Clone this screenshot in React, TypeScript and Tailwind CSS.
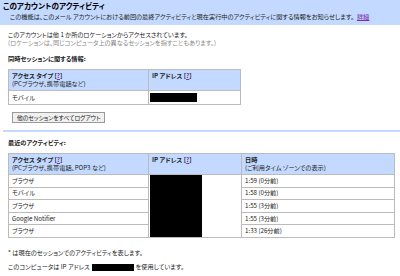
const rows = [
  { type: "ブラウザ", time: "1:59 (0分前)" },
  { type: "モバイル", time: "1:58 (0分前)" },
  { type: "ブラウザ", time: "1:55 (3分前)" },
  { type: "Google Notifier", time: "1:55 (3分前)" },
  { type: "ブラウザ", time: "1:33 (26分前)" },
];

function Help() {
  return (
    <>
      [<a className="text-[#7a2fb0] underline">?</a>]
    </>
  );
}

export default function App() {
  return (
    <div className="w-[400px] h-[276px] overflow-hidden bg-white text-[6.2px] leading-[8px] text-[#222] font-['Noto_Sans_CJK_JP','Noto_Sans',sans-serif] [font-feature-settings:'palt']">
      <div className="bg-[#c3d9ff] pl-[3px] pt-[1px] pb-[4px]">
        <h1 className="text-[7.6px] leading-[10px] font-bold text-black">このアカウントのアクティビティ</h1>
        <p className="pl-[7px] mt-[2px] whitespace-nowrap">
          この機能は、このメール アカウントにおける前回の最終アクティビティと現在実行中のアクティビティに関する情報をお知らせします。
          <a className="ml-[3px] text-[#7a2fb0] underline">詳細</a>
        </p>
      </div>

      <div className="px-[8px]">
        <p className="mt-[6px]">このアカウントは他 1 か所のロケーションからアクセスされています。</p>
        <p className="text-[#888]">(ロケーションは、同じコンピュータ上の異なるセッションを指すこともあります。)</p>
        <h2 className="mt-[8px] font-bold">同時セッションに関する情報:</h2>

        <table className="mt-[6px] w-[233px] border-collapse border border-[#bbb]">
          <tbody>
            <tr className="bg-[#c3d9ff] align-top">
              <td className="w-[140px] h-[21px] border border-[#bbb] px-[3px] pt-[2px]">
                <div className="font-bold">
                  アクセス タイプ <Help />
                </div>
                <div>(PCブラウザ、携帯電話など)</div>
              </td>
              <td className="border border-[#bbb] px-[3px] pt-[2px] font-bold">
                IP アドレス <Help />
              </td>
            </tr>
            <tr>
              <td className="h-[14px] border border-[#bbb] px-[3px]">モバイル</td>
              <td className="border border-[#bbb] px-[1px]">
                <div className="w-[47px] h-[9px] bg-black" />
              </td>
            </tr>
          </tbody>
        </table>

        <button className="mt-[7px] ml-[4px] h-[11px] px-[4px] border border-[#999] bg-[#f0f0f0] text-[5.8px] leading-[8px]">
          他のセッションをすべてログアウト
        </button>
      </div>

      <div className="mt-[7px] ml-[3px] h-[2px] bg-[#c3d9ff]" />

      <div className="px-[8px]">
        <h2 className="mt-[7px] font-bold">最近のアクティビティ:</h2>

        <table className="mt-[6px] w-[387px] border-collapse border border-[#bbb]">
          <tbody>
            <tr className="bg-[#c3d9ff] align-top">
              <td className="w-[140px] h-[21px] border border-[#bbb] px-[3px] pt-[2px]">
                <div className="font-bold">
                  アクセス タイプ <Help />
                </div>
                <div>(PCブラウザ、携帯電話、POP3 など)</div>
              </td>
              <td className="w-[93px] border border-[#bbb] px-[3px] pt-[2px] font-bold">
                IP アドレス <Help />
              </td>
              <td className="border border-[#bbb] px-[3px] pt-[2px]">
                <div className="font-bold">日時</div>
                <div>(ご利用タイム ゾーンでの表示)</div>
              </td>
            </tr>
            {rows.map((r, i) => (
              <tr key={i}>
                <td className="h-[12px] border border-[#bbb] px-[3px]">{r.type}</td>
                {i === 0 && (
                  <td rowSpan={5} className="border border-[#bbb] px-[1px] align-top">
                    <div className="w-[52px] h-[62px] bg-black" />
                  </td>
                )}
                <td className="border border-[#bbb] px-[3px]">{r.time}</td>
              </tr>
            ))}
          </tbody>
        </table>

        <p className="mt-[11px]">* は現在のセッションでのアクティビティを表します。</p>
        <p className="mt-[6px] flex items-center">
          このコンピュータは IP アドレス
          <span className="mx-[2px] inline-block w-[42px] h-[7px] bg-black" />
          を使用しています。
        </p>
      </div>
    </div>
  );
}
